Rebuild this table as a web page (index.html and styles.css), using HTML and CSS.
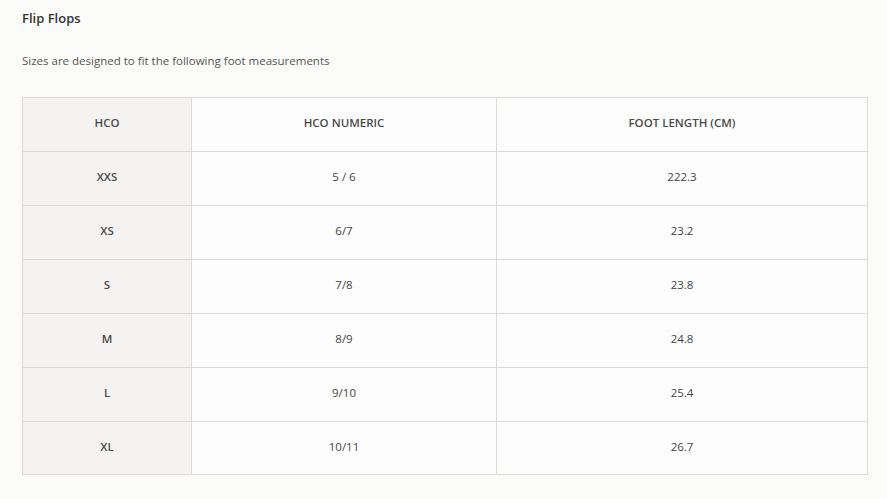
FILE: index.html
```html
<!DOCTYPE html>
<html>
<head>
<meta charset="utf-8">
<link rel="stylesheet" href="styles.css">
</head>
<body>
<div class="page">
  <h2 class="title">Flip Flops</h2>
  <p class="intro">Sizes are designed to fit the following foot measurements</p>
  <table class="size-table">
    <colgroup>
      <col class="c1"><col class="c2"><col class="c3">
    </colgroup>
    <thead>
      <tr><th class="key">HCO</th><th>HCO NUMERIC</th><th>FOOT LENGTH (CM)</th></tr>
    </thead>
    <tbody>
      <tr><td class="key">XXS</td><td>5 / 6</td><td>222.3</td></tr>
      <tr><td class="key">XS</td><td>6/7</td><td>23.2</td></tr>
      <tr><td class="key">S</td><td>7/8</td><td>23.8</td></tr>
      <tr><td class="key">M</td><td>8/9</td><td>24.8</td></tr>
      <tr><td class="key">L</td><td>9/10</td><td>25.4</td></tr>
      <tr><td class="key">XL</td><td>10/11</td><td>26.7</td></tr>
    </tbody>
  </table>
</div>
</body>
</html>
```

FILE: styles.css
```css
html, body {
  margin: 0;
  padding: 0;
  background: #fbfbfa;
}
.page {
  padding: 9px 22px 0 22px;
  font-family: "Open Sans", "Liberation Sans", sans-serif;
  color: #3a3a3a;
}
.title {
  margin: 0;
  font-size: 13px;
  font-weight: 600;
  line-height: 18px;
  color: #333;
}
.intro {
  margin: 26px 0 0 0;
  font-size: 11.5px;
  line-height: 16px;
  color: #555;
}
.size-table {
  margin-top: 28px;
  border-collapse: collapse;
  width: 845px;
  table-layout: fixed;
  background: #fdfdfd;
}
.c1 { width: 169px; }
.c2 { width: 305px; }
.c3 { width: 371px; }
.size-table th,
.size-table td {
  border: 1px solid #dcdad4;
  height: 49px;
  padding: 0 0 4px 0;
  text-align: center;
  vertical-align: middle;
  font-size: 11.5px;
  font-weight: 400;
  color: #444;
}
.size-table tbody tr:last-child td {
  height: 48px;
}
.size-table th {
  font-weight: 600;
  color: #4a4a4a;
}
.size-table .key {
  background: #f4f3f1;
  font-weight: 600;
  color: #4a4a4a;
}
```
